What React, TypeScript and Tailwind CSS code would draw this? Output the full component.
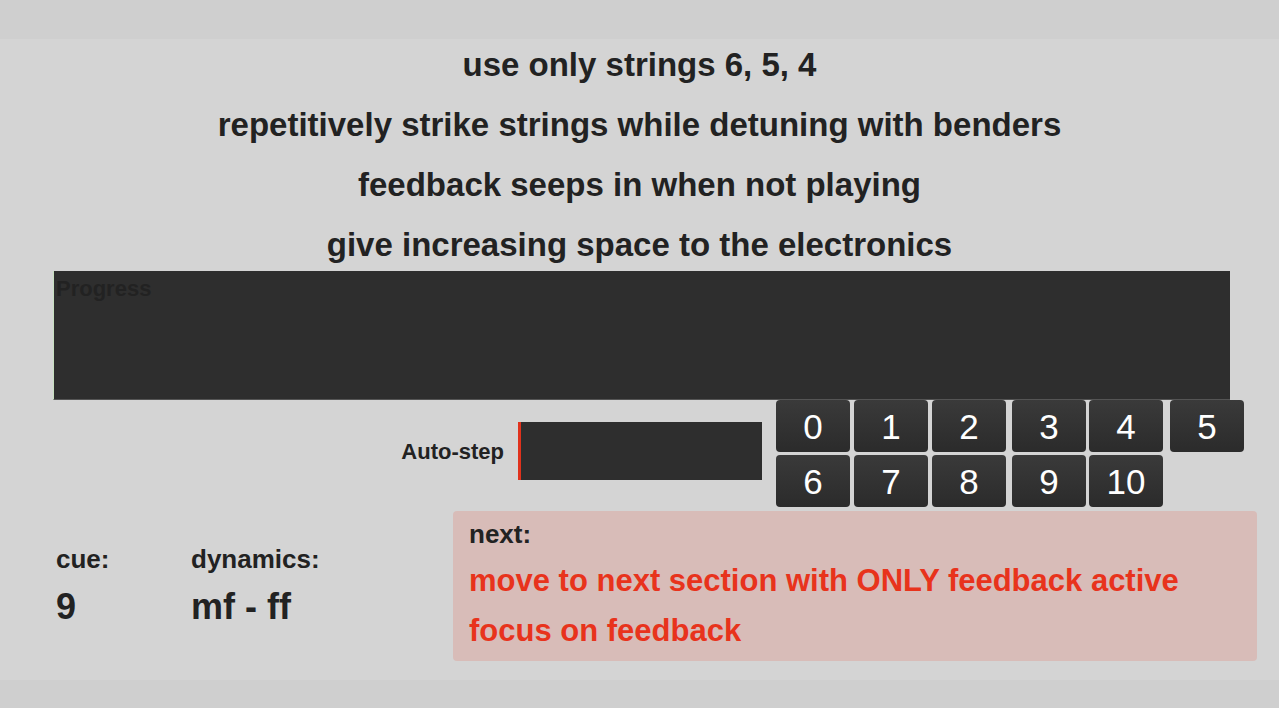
const lines = [
  'use only strings 6, 5, 4',
  'repetitively strike strings while detuning with benders',
  'feedback seeps in when not playing',
  'give increasing space to the electronics',
];

// left offsets of the cue buttons, as in the original layout
const gaps = ['ml-0', 'ml-[4px]', 'ml-[4px]', 'ml-[6px]', 'ml-[3px]', 'ml-[7px]'];
const row1 = ['0', '1', '2', '3', '4', '5'];
const row2 = ['6', '7', '8', '9', '10'];

function CueButton({ label, className }: { label: string; className: string }) {
  return (
    <button
      className={
        'w-[74px] h-[52px] rounded-[4px] bg-gradient-to-b from-[#3a3a3a] to-[#2b2b2b] text-white text-[35px] leading-none flex items-center justify-center font-["Liberation_Sans",Arial,sans-serif] ' +
        className
      }
    >
      {label}
    </button>
  );
}

export default function App() {
  return (
    <div className="w-[1279px] h-[708px] flex flex-col bg-[#cfcfcf] text-[#222] font-['Liberation_Sans',Arial,sans-serif]">
      <div className="h-[39px] shrink-0" />
      <main className="h-[641px] bg-[#d4d4d4] flex flex-col">
        <div className="flex flex-col items-center gap-[24px] pt-[7px]">
          {lines.map((l) => (
            <div key={l} className="h-[36px] flex items-center text-[33px] font-bold leading-none">
              {l}
            </div>
          ))}
        </div>
        <div className="ml-[53px] w-[1177px] mt-[9px] h-[129px] bg-[#2e2e2e] border-l border-[#c8e0c0] border-b border-b-[#555]">
          <div className="pl-[2px] pt-[7px] text-[22px] font-bold leading-none text-[#222]">Progress</div>
        </div>
        <div className="flex">
          <div className="w-[518px] flex items-center justify-end pr-[14px] h-[102px]">
            <span className="text-[22px] font-bold">Auto-step</span>
          </div>
          <div className="h-[102px] flex items-center">
            <div className="w-[244px] h-[58px] bg-[#2e2e2e] border-l-[3px] border-[#e0321c]" />
          </div>
          <div className="ml-[14px] flex flex-col gap-[3px]">
            <div className="flex">
              {row1.map((n, i) => (
                <CueButton key={n} label={n} className={gaps[i]} />
              ))}
            </div>
            <div className="flex">
              {row2.map((n, i) => (
                <CueButton key={n} label={n} className={gaps[i]} />
              ))}
            </div>
          </div>
        </div>
        <div className="flex mt-[4px]">
          <div className="w-[191px] pl-[56px] pt-[33px]">
            <div className="h-[30px] flex items-center text-[26px] font-bold leading-none">cue:</div>
            <div className="h-[40px] flex items-center text-[36px] font-bold leading-none mt-[13px]">9</div>
          </div>
          <div className="w-[262px] pt-[33px]">
            <div className="h-[30px] flex items-center text-[26px] font-bold leading-none">dynamics:</div>
            <div className="h-[40px] flex items-center text-[36px] font-bold leading-none mt-[13px]">mf - ff</div>
          </div>
          <div className="w-[804px] h-[150px] rounded-[4px] bg-[#d8bcb8] pl-[16px] pt-[8px]">
            <div className="h-[30px] flex items-center text-[26px] font-bold leading-none">next:</div>
            <div className="h-[40px] flex items-center text-[31px] font-bold leading-none text-[#e8331c] mt-[11px]">
              move to next section with ONLY feedback active
            </div>
            <div className="h-[40px] flex items-center text-[31px] font-bold leading-none text-[#e8331c] mt-[10px]">
              focus on feedback
            </div>
          </div>
        </div>
      </main>
      <div className="flex-1" />
    </div>
  );
}
